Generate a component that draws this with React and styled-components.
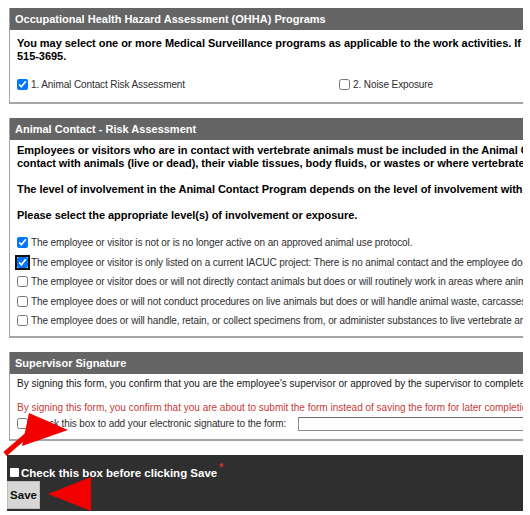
import styled, { createGlobalStyle } from "styled-components";

const FONT = `"Liberation Sans", Arial, sans-serif`;

const GlobalStyle = createGlobalStyle`
    body {
        margin: 0;
        background: #ffffff;
        font-family: ${FONT};
    }
`;

const Page = styled.div`
    position: relative;
    width: 523px;
    height: 515px;
    padding-top: 8px;
    box-sizing: border-box;
    overflow: hidden;
`;

const Panel = styled.section`
    width: 700px;
    margin: 0 0 14px 9px;
    border: 1px solid #a6a6a6;
    border-top: none;
    border-bottom-width: 2px;
    box-sizing: border-box;
`;

const PanelHeader = styled.h2`
    margin: 0;
    height: 22px;
    line-height: 22px;
    padding-left: 5px;
    background-color: #656565;
    color: #ffffff;
    font-size: 11px;
    font-weight: bold;
`;

const PanelBody = styled.div`
    padding: ${props => props.$top}px 7px ${props => props.$bottom}px 7px;
`;

const Lead = styled.p`
    margin: 0 0 13px 0;
    font-size: 11px;
    line-height: 13px;
    letter-spacing: -0.04px;
    font-weight: bold;
    color: #000;
    white-space: nowrap;
`;

const Note = styled.p`
    margin: 0 0 12px 0;
    font-size: 10px;
    line-height: 12px;
    color: ${props => (props.$warn ? '#c43b3b' : '#161616')};
    white-space: nowrap;
`;

const ProgramGrid = styled.div`
    display: grid;
    grid-template-columns: 322px 322px;
    height: 16px;
    align-items: center;
`;

const Option = styled.label`
    display: flex;
    align-items: center;
    gap: 3px;
    height: ${props => props.$h || 16}px;
    font-size: 10px;
    letter-spacing: -0.1px;
    color: #2e2e2e;
    white-space: nowrap;
`;

const OptionList = styled.div`
    display: flex;
    flex-direction: column;
    margin-top: -2px;
`;

const Box = styled.input.attrs({ type: 'checkbox' })`
    width: 11px;
    height: 11px;
    margin: 0;
    flex: none;
    accent-color: #0075ff;
    outline: ${props => (props.$focus ? '2px solid #111' : 'none')};
    outline-offset: 0;
    border-radius: 2px;
`;

const SignRow = styled.div`
    display: flex;
    align-items: center;
    height: 16px;
    margin-top: -10px;
`;

const SignField = styled.input`
    margin-left: 12px;
    width: 300px;
    height: 14px;
    box-sizing: border-box;
    border: 1px solid #8a8a8a;
    border-top-color: #6e6e6e;
    background: #fff;
`;

const Footer = styled.footer`
    margin: 11px 0 0 7px;
    width: 600px;
    height: 56px;
    padding-top: 12px;
    box-sizing: border-box;
    background-color: #2f2f2f;
`;

const ConfirmRow = styled.label`
    display: flex;
    align-items: center;
    height: 12px;
    gap: 2px;
    color: #ffffff;
    font-size: 11.5px;
    font-weight: bold;
    white-space: nowrap;
`;

const WhiteBox = styled.input.attrs({ type: 'checkbox' })`
    appearance: none;
    width: 9px;
    height: 9px;
    margin: 0 0 0 3px;
    background: #fff;
    border: none;
    border-radius: 1px;
`;

const Required = styled.span`
    color: #e03030;
    font-size: 10px;
    align-self: flex-start;
    margin-top: -5px;
    margin-left: 0;
`;

const SaveButton = styled.button`
    display: block;
    margin-top: 2px;
    width: 33px;
    height: 28px;
    padding: 0;
    background: #d6d6d6;
    border: 1px solid #bdbdbd;
    font-family: ${FONT};
    font-size: 11.5px;
    font-weight: bold;
    color: #111;
`;

const Overlay = styled.svg`
    position: absolute;
    left: 0;
    top: 0;
    pointer-events: none;
`;

const levels = [
    { text: 'The employee or visitor is not or is no longer active on an approved animal use protocol.', checked: true },
    { text: 'The employee or visitor is only listed on a current IACUC project: There is no animal contact and the employee does', checked: true, focus: true },
    { text: 'The employee or visitor does or will not directly contact animals but does or will routinely work in areas where animals', checked: false },
    { text: 'The employee does or will not conduct procedures on live animals but does or will handle animal waste, carcasses', checked: false },
    { text: 'The employee does or will handle, retain, or collect specimens from, or administer substances to live vertebrate animals', checked: false },
];

function App() {
    return (
        <Page>
            <GlobalStyle />

            <Panel>
                <PanelHeader>Occupational Health Hazard Assessment (OHHA) Programs</PanelHeader>
                <PanelBody $top={7} $bottom={10}>
                    <Lead>
                        You may select one or more Medical Surveillance programs as applicable to the work activities. If
                        <br />
                        515-3695.
                    </Lead>
                    <ProgramGrid>
                        <Option><Box defaultChecked /> 1. Animal Contact Risk Assessment</Option>
                        <Option><Box /> 2. Noise Exposure</Option>
                    </ProgramGrid>
                </PanelBody>
            </Panel>

            <Panel>
                <PanelHeader>Animal Contact - Risk Assessment</PanelHeader>
                <PanelBody $top={4} $bottom={5}>
                    <Lead>
                        Employees or visitors who are in contact with vertebrate animals must be included in the Animal Contact
                        <br />
                        contact with animals (live or dead), their viable tissues, body fluids, or wastes or where vertebrate
                    </Lead>
                    <Lead>The level of involvement in the Animal Contact Program depends on the level of involvement with</Lead>
                    <Lead>Please select the appropriate level(s) of involvement or exposure.</Lead>
                    <OptionList>
                        {levels.map((item, i) => (
                            <Option key={i} $h={19.5}>
                                <Box defaultChecked={item.checked} $focus={item.focus} /> {item.text}
                            </Option>
                        ))}
                    </OptionList>
                </PanelBody>
            </Panel>

            <Panel>
                <PanelHeader>Supervisor Signature</PanelHeader>
                <PanelBody $top={4} $bottom={7}>
                    <Note>By signing this form, you confirm that you are the employee's supervisor or approved by the supervisor to complete this form.</Note>
                    <Note $warn>By signing this form, you confirm that you are about to submit the form instead of saving the form for later completion.</Note>
                    <SignRow>
                        <Option><Box /> Check this box to add your electronic signature to the form:</Option>
                        <SignField type="text" />
                    </SignRow>
                </PanelBody>
            </Panel>

            <Footer>
                <ConfirmRow>
                    <WhiteBox />
                    Check this box before clicking Save
                    <Required>*</Required>
                </ConfirmRow>
                <SaveButton>Save</SaveButton>
            </Footer>

            <Overlay width="523" height="515" viewBox="0 0 523 515">
                <line x1="5" y1="454" x2="27" y2="435" stroke="#f20000" strokeWidth="5" />
                <polygon points="22,446 29,413 68,430" fill="#f20000" />
                <polygon points="48,494 91,477 91,511" fill="#f20000" />
            </Overlay>
        </Page>
    );
}

export default App;
